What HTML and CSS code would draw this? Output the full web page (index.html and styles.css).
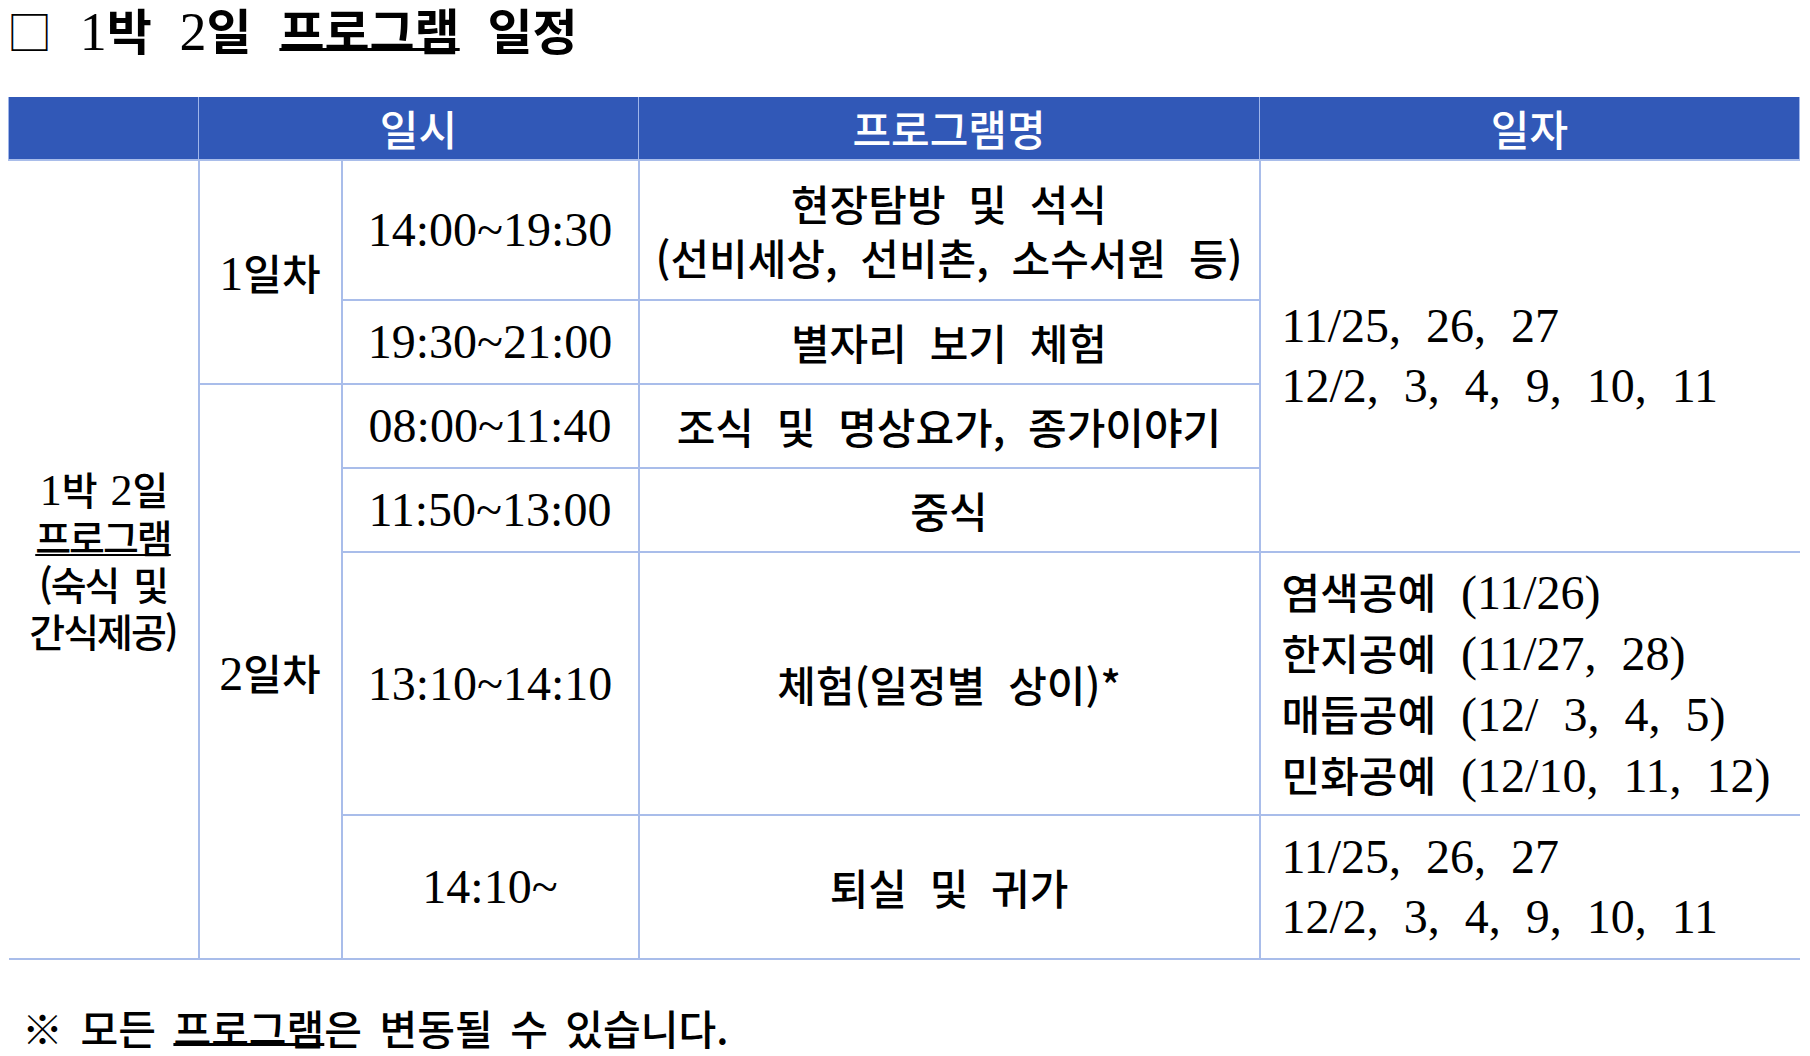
FILE: index.html
```html
<!DOCTYPE html>
<html lang="ko">
<head>
<meta charset="utf-8">
<title>1박 2일 프로그램 일정</title>
<link rel="stylesheet" href="styles.css">
</head>
<body>
<div class="page">
  <h1 class="title"><span class="sq">□</span> <span class="n">1</span>박 <span class="n">2</span>일 <span class="ul">프로그램</span> 일정</h1>
  <table class="schedule">
    <colgroup>
      <col class="c1"><col class="c2"><col class="c3"><col class="c4"><col class="c5">
    </colgroup>
    <thead>
      <tr class="rh">
        <th class="first"></th>
        <th colspan="2">일시</th>
        <th>프로그램명</th>
        <th class="last">일자</th>
      </tr>
    </thead>
    <tbody>
      <tr class="r1">
        <td rowspan="6" class="group first"><span class="gn">1</span>박 <span class="gn">2</span>일<br><span class="ul">프로그램</span><br>(숙식 및<br>간식제공)</td>
        <td rowspan="2" class="day"><span class="n">1</span>일차</td>
        <td class="time">14:00~19:30</td>
        <td class="prog two">현장탐방 및 석식<br>(선비세상, 선비촌, 소수서원 등)</td>
        <td rowspan="4" class="dates last">11/25, 26, 27<br>12/2, 3, 4, 9, 10, 11</td>
      </tr>
      <tr class="r2">
        <td class="time">19:30~21:00</td>
        <td class="prog">별자리 보기 체험</td>
      </tr>
      <tr class="r3">
        <td rowspan="4" class="day"><span class="n">2</span>일차</td>
        <td class="time">08:00~11:40</td>
        <td class="prog">조식 및 명상요가, 종가이야기</td>
      </tr>
      <tr class="r4">
        <td class="time">11:50~13:00</td>
        <td class="prog">중식</td>
      </tr>
      <tr class="r5">
        <td class="time">13:10~14:10</td>
        <td class="prog">체험(일정별 상이)*</td>
        <td class="dates crafts last"><span class="k">염색공예</span> (11/26)<br><span class="k">한지공예</span> (11/27, 28)<br><span class="k">매듭공예</span> (12/ 3, 4, 5)<br><span class="k">민화공예</span> (12/10, 11, 12)</td>
      </tr>
      <tr class="r6">
        <td class="time">14:10~</td>
        <td class="prog">퇴실 및 귀가</td>
        <td class="dates last">11/25, 26, 27<br>12/2, 3, 4, 9, 10, 11</td>
      </tr>
    </tbody>
  </table>
  <p class="note">※ 모든 <span class="ul">프로그램</span>은 변동될 수 있습니다.</p>
</div>
</body>
</html>
```

FILE: styles.css
```css
html, body {
  margin: 0;
  padding: 0;
  background: #ffffff;
}

body {
  font-family: "Noto Sans CJK KR", "Noto Sans", sans-serif;
  color: #000000;
}

.page {
  padding: 0 8px;
}

.title {
  margin: 0 0 0 -1px;
  height: 97px;
  line-height: 58px;
  font-size: 49px;
  font-weight: 700;
  word-spacing: 14px;
  white-space: nowrap;
}

.title .sq {
  font-weight: 400;
  font-size: 45px;
}

.title .n {
  font-family: "Liberation Serif", serif;
  font-size: 54px;
  font-weight: 400;
  line-height: 1;
}

.ul {
  text-decoration: underline;
  text-decoration-thickness: 2px;
  text-underline-offset: 1px;
}

.title .ul,
.note .ul {
  text-underline-offset: -2px;
  text-decoration-thickness: 3px;
}

.schedule {
  border-collapse: collapse;
  table-layout: fixed;
  width: 1791px;
  border: none;
}

.c1 { width: 190px; }
.c2 { width: 143px; }
.c3 { width: 297px; }
.c4 { width: 621px; }
.c5 { width: 540px; }

.rh { height: 63px; }
.r1 { height: 140px; }
.r2 { height: 84px; }
.r3 { height: 84px; }
.r4 { height: 84px; }
.r5 { height: 263px; }
.r6 { height: 144px; }

.schedule th {
  background: #3158b7;
  color: #ffffff;
  font-weight: 500;
  font-size: 42px;
  line-height: 50px;
  padding: 0;
  border-left: 1px solid #9fb5ea;
  border-right: 1px solid #9fb5ea;
  border-bottom: 2px solid #a9bdea;
  border-top: none;
  text-align: center;
  vertical-align: middle;
}

.schedule td {
  border: 2px solid #a9bdea;
  padding: 0;
  text-align: center;
  vertical-align: middle;
  font-size: 42px;
  font-weight: 500;
  line-height: 54px;
  word-spacing: 11px;
}

.schedule td.first { border-left: none; }
.schedule td.last { border-right: none; }

.schedule td.group {
  font-size: 39px;
  line-height: 47px;
  letter-spacing: -2px;
  word-spacing: 6px;
  white-space: nowrap;
}

.gn {
  font-family: "Liberation Serif", serif;
  font-size: 44px;
  font-weight: 400;
  letter-spacing: 0;
  line-height: 1;
}

.day .n {
  font-family: "Liberation Serif", serif;
  font-size: 48px;
  font-weight: 400;
  line-height: 1;
}

.schedule td.time {
  font-family: "Liberation Serif", serif;
  font-size: 48px;
  font-weight: 400;
}

.schedule td.dates {
  text-align: left;
  padding-left: 21px;
  font-family: "Liberation Serif", "Noto Sans CJK KR", serif;
  font-size: 48px;
  font-weight: 400;
  line-height: 60px;
  word-spacing: 13px;
  white-space: nowrap;
}

.schedule td.crafts {
  line-height: 61px;
}

.dates .k {
  font-family: "Noto Sans CJK KR", sans-serif;
  font-size: 42px;
  font-weight: 500;
  line-height: 1;
}

.note {
  margin: 42px 0 0 14px;
  font-size: 41px;
  font-weight: 500;
  line-height: 50px;
  word-spacing: 6px;
  white-space: nowrap;
}
```
